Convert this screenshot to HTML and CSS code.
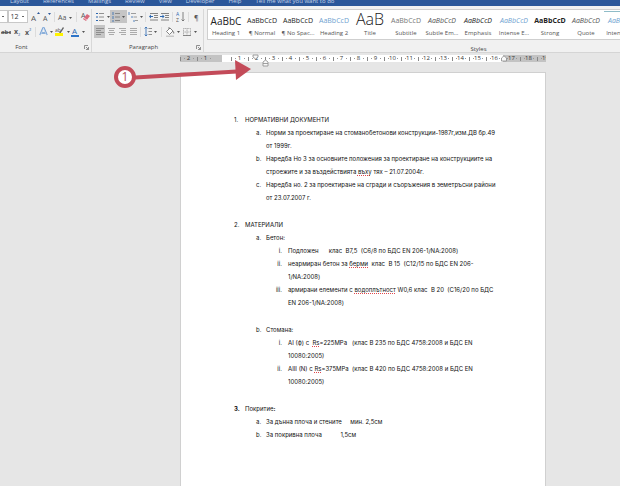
FILE: index.html
```html
<!DOCTYPE html>
<html lang="bg">
<head>
<meta charset="utf-8">
<title>Document</title>
<link rel="stylesheet" href="styles.css">
</head>
<body>
<nav class="tabs">
  <a href="#">Layout</a><a href="#">References</a><a href="#">Mailings</a><a href="#">Review</a><a href="#">View</a><a href="#">Developer</a><a href="#">Help</a><a href="#">Tell me what you want to do</a>
</nav>
<header class="ribbon">
  <section class="group font-group">
    <div class="row">
      <select class="face" aria-label="Font"><option></option></select>
      <select class="size" aria-label="Font size"><option>12</option></select>
      <button class="w12" aria-label="Grow font"><svg width="10" height="12"><text x="0" y="10" class="g8">A</text><path d="M6 3l1.500-2 1.500 2z" fill="#2b579a"/></svg></button>
      <button class="w12" aria-label="Shrink font"><svg width="10" height="12"><text x="1" y="10" class="g7">A</text><path d="M6 2l1.500 2 1.500-2z" fill="#2b579a"/></svg></button>
      <i class="sep"></i>
      <button class="w16" aria-label="Change case"><svg width="16" height="12"><text x="1" y="9" class="g7">Aa</text><path d="M12 6h3l-1.500 2z"/></svg></button>
      <i class="sep wide"></i>
      <button class="w12" aria-label="Clear formatting"><svg width="11" height="12"><text x="1" y="7" class="g7">A</text><path d="M3 8l4-5 3 2-4 5z" fill="#d8697b"/><path d="M4 7l3 2" stroke="#fff" stroke-width=".6"/></svg></button>
    </div>
    <div class="row">
      <button class="w12" aria-label="Strikethrough"><svg width="12" height="12"><text x="1" y="8" class="g6 b">abc</text><path d="M1 6.500h10" stroke="#444" stroke-width=".7"/></svg></button>
      <button class="w12" aria-label="Subscript"><svg width="10" height="12"><text x="2" y="8" class="g7 b">x</text><text x="6" y="10" class="g4" fill="#2b579a">2</text></svg></button>
      <button class="w12" aria-label="Superscript"><svg width="10" height="12"><text x="2" y="9" class="g7 b">x</text><text x="6" y="5" class="g4" fill="#2b579a">2</text></svg></button>
      <i class="sep"></i>
      <button class="w16" aria-label="Text effects"><svg width="14" height="12"><path d="M1 9L4 2h1l3 7M2.500 7h4" fill="none" stroke="#6b9ad2" stroke-width="1.500"/><path d="M1.500 9l3-7 3 7" fill="none" stroke="#fff" stroke-width=".5"/><path d="M11 5h3l-1.500 2z"/></svg></button>
      <button class="w16" aria-label="Highlight"><svg width="15" height="12"><text x="0" y="6" class="g5">ab</text><path d="M4 7l4-6 1 1-4 6z" fill="#666"/><path d="M0 7h8v3H0z" fill="#fff200"/><path d="M12 5h3l-1.500 2z"/></svg></button>
      <button class="w16" aria-label="Font colour"><svg width="14" height="12"><text x="1" y="8" class="g8 blue">A</text><path d="M0 9h8v2H0z" fill="#2f75c8"/><path d="M11 5h3l-1.500 2z"/></svg></button>
    </div>
    <h2>Font</h2>
    <svg class="launch" width="5" height="5"><path d="M.5 4V.5H4M2 2l2.500 2.500M4.500 2v2.500H2" fill="none" stroke="#777" stroke-width=".8"/></svg>
  </section>
  <section class="group para-group">
    <div class="row">
      <button class="w16" aria-label="Bullets"><svg width="15" height="12"><path d="M1 2h2v1H1zM1 5.500h2v1H1zM1 9h2v1H1z" fill="#2b67b0"/><path d="M4 2.500h5M4 6h5M4 9.500h5" stroke="#777" stroke-width=".8"/><path d="M12 5h3l-1.500 2z"/></svg></button>
      <button class="w18 on" aria-label="Numbering"><svg width="15" height="12"><path d="M2 1v3M2 5v3M2 9v2" stroke="#2b67b0" stroke-width=".8"/><path d="M4 2.500h5M4 6h5M4 9.500h5" stroke="#777" stroke-width=".8"/><path d="M11 5h3l-1.500 2z"/></svg></button>
      <button class="w16" aria-label="Multilevel list"><svg width="15" height="12"><path d="M1 1v3M4 5v2M6 9v2" stroke="#2b67b0" stroke-width=".8"/><path d="M3 2.500h5M5.500 6H9M7 9.500h3" stroke="#888" stroke-width=".8"/><path d="M12 5h3l-1.500 2z"/></svg></button>
      <i class="sep"></i>
      <button class="w12" aria-label="Decrease indent"><svg width="10" height="12"><path d="M1 2.500h8M5 4.500h4M5 6.500h4M1 9h8" stroke="#777" stroke-width=".9"/><path d="M0 5.500l2-2v1.400h2v1.200H2v1.400z" fill="#2b67b0"/></svg></button>
      <button class="w12" aria-label="Increase indent"><svg width="10" height="12"><path d="M1 2.500h8M5 4.500h4M5 6.500h4M1 9h8" stroke="#777" stroke-width=".9"/><path d="M4.500 5.500l-2-2v1.400H0v1.200h2.500v1.400z" fill="#2b67b0"/></svg></button>
      <i class="sep"></i>
      <button class="w12" aria-label="Sort"><svg width="10" height="12"><text x="0" y="5" class="g5 blue">A</text><text x="0" y="11" class="g5">Z</text><path d="M7 1v9M5.500 8.500L7 10l1.500-1.500" fill="none" stroke="#666" stroke-width=".8"/></svg></button>
      <i class="sep"></i>
      <button class="w12" aria-label="Show marks"><svg width="10" height="12"><text x="2" y="9" class="g7">¶</text></svg></button>
    </div>
    <div class="row">
      <button class="w12 on" aria-label="Align left"><svg width="10" height="12"><path d="M1 2.500h8M1 4.500h5M1 6.500h8M1 8.500h5" stroke="#888" stroke-width=".9"/></svg></button>
      <button class="w12" aria-label="Centre"><svg width="10" height="12"><path d="M2 2.500h7M3 4.500h5M2 6.500h7M3 8.500h5" stroke="#999" stroke-width=".8"/></svg></button>
      <button class="w12" aria-label="Align right"><svg width="10" height="12"><path d="M2 2.500h7M4 4.500h5M2 6.500h7M4 8.500h5" stroke="#999" stroke-width=".8"/></svg></button>
      <button class="w12" aria-label="Justify"><svg width="10" height="12"><path d="M2 2.500h7M2 4.500h7M2 6.500h7M2 8.500h7" stroke="#999" stroke-width=".8"/></svg></button>
      <i class="sep"></i>
      <button class="w16" aria-label="Line spacing"><svg width="14" height="12"><path d="M2 1v9M.700 2.500L2 1l1.300 1.500M.700 8.500L2 10l1.300-1.500" fill="none" stroke="#2b67b0" stroke-width=".8"/><path d="M4.500 2.500H8M4.500 5.500H8M4.500 8.500H8" stroke="#777" stroke-width=".8"/><path d="M10 5h3l-1.500 2z"/></svg></button>
      <i class="sep"></i>
      <button class="w18" aria-label="Shading"><svg width="15" height="12"><path d="M1.500 5.500L5 2l3 3-3.500 3.500zM4 3V1" fill="#fff" stroke="#666" stroke-width=".8"/><path d="M8 5c1.500 1 1.500 2 .8 3z" fill="#555"/><path d="M1 9.500h8v1.500H1z" fill="#c8c8c8"/><path d="M12 5h3l-1.500 2z"/></svg></button>
      <button class="w16" aria-label="Borders"><svg width="15" height="12"><path d="M1.500 2.500h7v7h-7zM5 2.500v7M1.500 6h7" fill="none" stroke="#999" stroke-width=".8" stroke-dasharray="1 .6"/><path d="M1 9.500h8" stroke="#777" stroke-width=".8"/><path d="M12 5h3l-1.500 2z"/></svg></button>
    </div>
    <h2>Paragraph</h2>
    <svg class="launch" width="5" height="5"><path d="M.5 4V.5H4M2 2l2.500 2.500M4.500 2v2.500H2" fill="none" stroke="#777" stroke-width=".8"/></svg>
  </section>
  <section class="group styles-group">
    <div class="gallery">
      <button><b class="h1">AaBbC</b><span>Heading 1</span></button>
      <button><b>AaBbCcD</b><span>¶ Normal</span></button>
      <button><b>AaBbCcD</b><span>¶ No Spac...</span></button>
      <button><b class="h2">AaBbCcD</b><span>Heading 2</span></button>
      <button><b class="title">AaB</b><span>Title</span></button>
      <button><b class="sub">AaBbCcD</b><span>Subtitle</span></button>
      <button><b class="it soft">AaBbCcD</b><span>Subtle Em...</span></button>
      <button><b class="it">AaBbCcD</b><span>Emphasis</span></button>
      <button><b class="it h2">AaBbCcD</b><span>Intense E...</span></button>
      <button><b class="strong">AaBbCcD</b><span>Strong</span></button>
      <button><b class="it soft">AaBbCcD</b><span>Quote</span></button>
      <button><b class="it h2 lined">AaBbCcD</b><span>Intense Q...</span></button>
    </div>
    <h2>Styles</h2>
  </section>
</header>
<main class="workspace">
  <div class="ruler">
    <span class="out">2</span><span class="out">1</span><span class="zero"></span><span>1</span><span>2</span><span>3</span><span>4</span><span>5</span><span>6</span><span>7</span><span>8</span><span>9</span><span>10</span><span>11</span><span>12</span><span>13</span><span>14</span><span>15</span><span>16</span><span class="out">17</span><span class="out">18</span><span class="out">19</span>
    <svg class="indents" width="18" height="14"><path d="M1 1h5v2L3.500 5 1 3z M11 8l2.500-2L16 8v4h-5zM11 9.500h5" fill="#f8f8f8" stroke="#8a8a8a" stroke-width=".8"/></svg>
    <svg class="right-indent" width="6" height="7"><path d="M.5 3L3 .8 5.500 3v3h-5z" fill="#f8f8f8" stroke="#8a8a8a" stroke-width=".8"/></svg>
  </div>
  <article class="page">
    <ol class="chapters">
      <li><div>НОРМАТИВНИ ДОКУМЕНТИ
        <ol class="letters">
          <li><p>Норми за проектиране на стоманобетонови конструкции-1987г,изм.ДВ бр.49<br>от 1999г.</p></li>
          <li><p>Наредба Но 3 за основните положения за проектиране на конструкциите на<br>строежите и за въздействията <u>въху</u> тях – 21.07.2004г.</p></li>
          <li><p>Наредба но. 2 за проектиране на сгради и съоръжения в земетръсни райони<br>от 23.07.2007 г.</p></li>
        </ol></div></li>
      <li><div>МАТЕРИАЛИ
        <ol class="letters">
          <li><div>Бетон:
            <ol class="romans">
              <li><p>Подложен      клас  В7,5  (С6/8 по БДС EN 206-1/NA:2008)</p></li>
              <li><p>неармиран бетон за <u>берми</u>  клас  В 15  (С12/15 по БДС EN 206-<br>1/NA:2008)</p></li>
              <li><p>армирани елементи с <u>водоплътност</u> W0,6 клас  В 20  (С16/20 по БДС<br>EN 206-1/NA:2008)</p></li>
            </ol></div></li>
          <li class="spaced"><div>Стомана:
            <ol class="romans">
              <li><p>АI (ф) с  <u>Rs</u>=225MPa   (клас В 235 по БДС 4758:2008 и БДС EN<br>10080:2005)</p></li>
              <li><p>АIII (N) с <u>Rs</u>=375MPa  (клас В 420 по БДС 4758:2008 и БДС EN<br>10080:2005)</p></li>
            </ol></div></li>
        </ol></div></li>
      <li class="heavy"><div>Покритие<strong>:</strong>
        <ol class="letters">
          <li><p>За дънна плоча и стените     мин. 2,5см</p></li>
          <li><p>За покривна плоча           1,5см</p></li>
        </ol></div></li>
    </ol>
  </article>
</main>
<svg class="callout" width="140" height="34"><path d="M22 18.500L124 12.500" stroke="#c34b59" stroke-width="4"/><path d="M122 1l16 9-15 11z" fill="#c34b59"/><circle cx="12" cy="18" r="9" fill="#fff" stroke="#c34b59" stroke-width="4"/><text x="12" y="22" text-anchor="middle">1</text></svg>
</body>
</html>
```
FILE: styles.css
```css
* { box-sizing: border-box; }
body {
  margin: 0;
  min-height: 100vh;
  display: flex;
  flex-direction: column;
  overflow: hidden;
  background: #e6e6e6;
  color: #333;
  font-family: "Open Sans", "Noto Sans", sans-serif;
  font-size: 6px;
}
.tabs {
  display: flex;
  align-items: flex-end;
  gap: 14px;
  height: 6px;
  padding: 0 0 1px 10px;
  overflow: hidden;
  background: #2b579a;
}
.tabs a { color: #c5d3e8; text-decoration: none; line-height: 8px; white-space: nowrap; }
.ribbon {
  display: flex;
  height: 47px;
  padding-top: 3px;
  background: #f1f1f1;
  border-bottom: 1px solid #d5d5d5;
}
.group { position: relative; display: flex; flex-direction: column; gap: 2px; flex: none; padding-top: 1px; }
.font-group { width: 92px; border-right: 1px solid #d8d8d8; }
.font-group h2 { padding-right: 48px; }
.para-group { width: 112px; padding-left: 2px; border-right: 1px solid #d8d8d8; }
.para-group h2 { padding-right: 10px; }
.styles-group { flex: 1; min-width: 0; padding: 0 0 0 3px; }
.styles-group h2 { padding-left: 130px; }
.row { display: flex; align-items: center; height: 14px; }
.sep { width: 1px; height: 10px; margin: 0 2px; background: #dcdcdc; }
.wide { margin: 0 3px; }
button { padding: 0; border: 0; background: none; font: inherit; color: inherit; }
.row button { display: flex; justify-content: center; align-items: center; height: 13px; flex: none; }
.w12 { width: 11px; }
.w16 { width: 16px; }
.w18 { width: 17px; }
.row .on { background: #c5c5c5; }
.row svg { fill: #555; display: block; }
select {
  appearance: none;
  height: 13px;
  padding: 0 2px;
  border: 1px solid #c8c8c8;
  border-radius: 0;
  color: #333;
  font: 7px "Open Sans", sans-serif;
  background: linear-gradient(#666, #666) right 3px center / 2px 1px no-repeat #fff;
}
.face { width: 8px; border-left: 0; }
.size { width: 23px; margin-right: 2px; }
h2 { margin: 0; text-align: center; font-size: 6px; font-weight: 400; line-height: 14px; color: #444; }
.launch { position: absolute; right: 2px; bottom: 2px; }
.g8 { font-size: 8px; } .g7 { font-size: 7px; } .g6 { font-size: 6px; } .g5 { font-size: 5px; } .g4 { font-size: 4px; }
.b { font-weight: 700; }
.blue { fill: #2b67b0; }
.gallery {
  display: flex;
  flex: none;
  height: 31px;
  overflow: hidden;
  background: #fff;
  border: 1px solid #cfcfcf;
  border-right: 0;
}
.gallery button { flex: none; width: 36px; overflow: hidden; white-space: nowrap; }
.gallery b { display: block; height: 17px; overflow: hidden; font: 7px/20px "Open Sans", sans-serif; color: #222; }
.gallery span { display: block; line-height: 11px; color: #555; }
.gallery .h1 { font-size: 10px; }
.gallery .title { font-size: 16px; font-weight: 300; line-height: 17px; }
.gallery .h2 { color: #6f9fd0; }
.gallery .sub { color: #777; }
.gallery .it { font-style: italic; }
.gallery .soft { color: #555; }
.gallery .strong { font-weight: 700; }
.gallery .lined { box-shadow: inset 0 1px #8fbcc8; }
.workspace {
  flex: 1;
  display: grid;
  grid-template-columns: 180fr 366fr 74fr;
  grid-template-rows: 8px 1fr;
  row-gap: 9px;
  padding-top: 2px;
}
.ruler, .page { grid-column: 2; min-width: 0; }
.ruler { position: relative; display: flex; height: 7px; clip-path: inset(-2px 0 -8px 0); }
.ruler span {
  flex: none;
  width: 17px;
  text-align: center;
  font-size: 6px;
  line-height: 7px;
  background:
    linear-gradient(#888, #888) 0 2px / 1px 4px no-repeat,
    linear-gradient(#999, #999) 4px 3px / 1px 1px no-repeat,
    linear-gradient(#999, #999) 13px 3px / 1px 1px no-repeat,
    #fff;
}
.ruler .out { background-color: #c3c3c3; }
.ruler .zero { background: linear-gradient(90deg, #c3c3c3 50%, #fff 50%); }
.indents { position: absolute; left: 72px; top: -1px; }
.right-indent { position: absolute; left: 321px; top: 0; }
.page {
  padding: 40px 20px 0 53px;
  background: #fff;
  border: 1px solid #d0d0d0;
  border-bottom: 0;
  color: #111;
  font-family: Inter, "Open Sans", sans-serif;
  font-size: 6px;
  line-height: 13px;
}
.page ol { margin: 0; padding: 0; list-style: none; counter-reset: item; }
.page p { margin: 0; white-space: pre; }
.page li { display: grid; counter-increment: item; }
.chapters > li { grid-template-columns: 11px 1fr; }
.chapters > li::before { content: counter(item) "."; }
.chapters > .heavy::before { font-weight: 700; }
.chapters > li + li, .page .spaced { margin-top: 14px; }
.letters > li { grid-template-columns: 10px 1fr; margin-left: 11px; }
.letters > li::before { content: counter(item, lower-alpha) "."; }
.romans > li { grid-template-columns: 16px 1fr; column-gap: 6px; }
.romans > li::before { content: counter(item, lower-roman) "."; text-align: right; }
.page u { text-decoration: underline dotted #e0474c 1px; text-underline-offset: 1px; text-decoration-skip-ink: none; }
.callout { position: absolute; left: 113px; top: 59px; }
.callout text { font: 12px "Open Sans", sans-serif; fill: #b3505a; }
```
